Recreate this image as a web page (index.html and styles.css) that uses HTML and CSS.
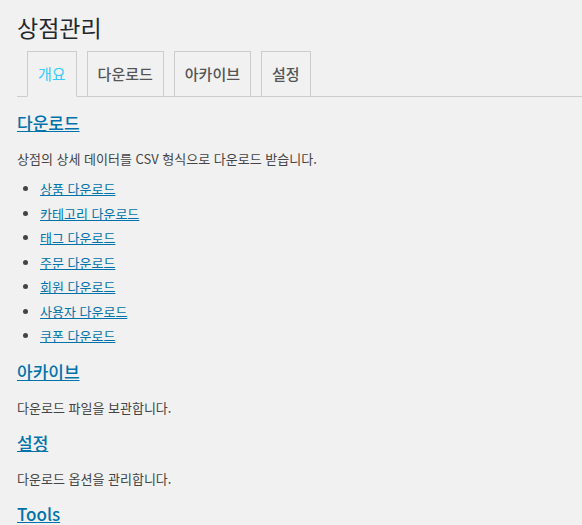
FILE: index.html
```html
<!DOCTYPE html>
<html lang="ko">

<head>
  <meta charset="UTF-8">
  <title>상점관리</title>
  <link rel="stylesheet" href="styles.css">
</head>

<body>
  <div class="wrap">
    <h1>상점관리</h1>
    <nav class="tabs">
      <a href="#" class="tab active">개요</a>
      <a href="#" class="tab">다운로드</a>
      <a href="#" class="tab">아카이브</a>
      <a href="#" class="tab">설정</a>
    </nav>

    <h2><a href="#">다운로드</a></h2>
    <p>상점의 상세 데이터를 CSV 형식으로 다운로드 받습니다.</p>
    <ul class="links">
      <li><a href="#">상품 다운로드</a></li>
      <li><a href="#">카테고리 다운로드</a></li>
      <li><a href="#">태그 다운로드</a></li>
      <li><a href="#">주문 다운로드</a></li>
      <li><a href="#">회원 다운로드</a></li>
      <li><a href="#">사용자 다운로드</a></li>
      <li><a href="#">쿠폰 다운로드</a></li>
    </ul>

    <h2><a href="#">아카이브</a></h2>
    <p>다운로드 파일을 보관합니다.</p>

    <h2><a href="#">설정</a></h2>
    <p>다운로드 옵션을 관리합니다.</p>

    <h2><a href="#">Tools</a></h2>
  </div>
</body>

</html>
```

FILE: styles.css
```css
body {
  margin: 0;
  background-color: #f1f1f1;
  color: #444;
  font-family: "Segoe UI", "Noto Sans CJK KR", "Noto Sans", sans-serif;
  font-size: 13px;
}

.wrap {
  padding: 10px 0 0 17px;
}

h1 {
  margin: 0;
  font-size: 23px;
  font-weight: 400;
  line-height: 34px;
  color: #23282d;
}

.tabs {
  display: flex;
  margin-top: 7px;
  margin-bottom: 14px;
  border-bottom: 1px solid #ccc;
  padding-left: 10px;
}

.tabs .tab {
  margin-bottom: -1px;
  margin-right: 10px;
  padding: 0 10px;
  height: 44px;
  line-height: 44px;
  border: 1px solid #ccc;
  background-color: #f1f1f1;
  color: #555;
  font-size: 15px;
  font-weight: 500;
  text-decoration: none;
}

.tabs .tab.active {
  border-bottom-color: #f1f1f1;
  color: #33ccff;
  font-weight: 400;
}

h2 {
  margin: 13px 0 0;
  font-size: 17px;
  font-weight: 500;
  line-height: 24px;
}

h2 a,
.links a {
  color: #0073aa;
}

p {
  margin: 14px 0 0;
  line-height: 20px;
}

.links {
  margin: 10px 0 14px;
  padding-left: 23px;
}

.links li {
  line-height: 20px;
  margin-bottom: 4.5px;
}
```
